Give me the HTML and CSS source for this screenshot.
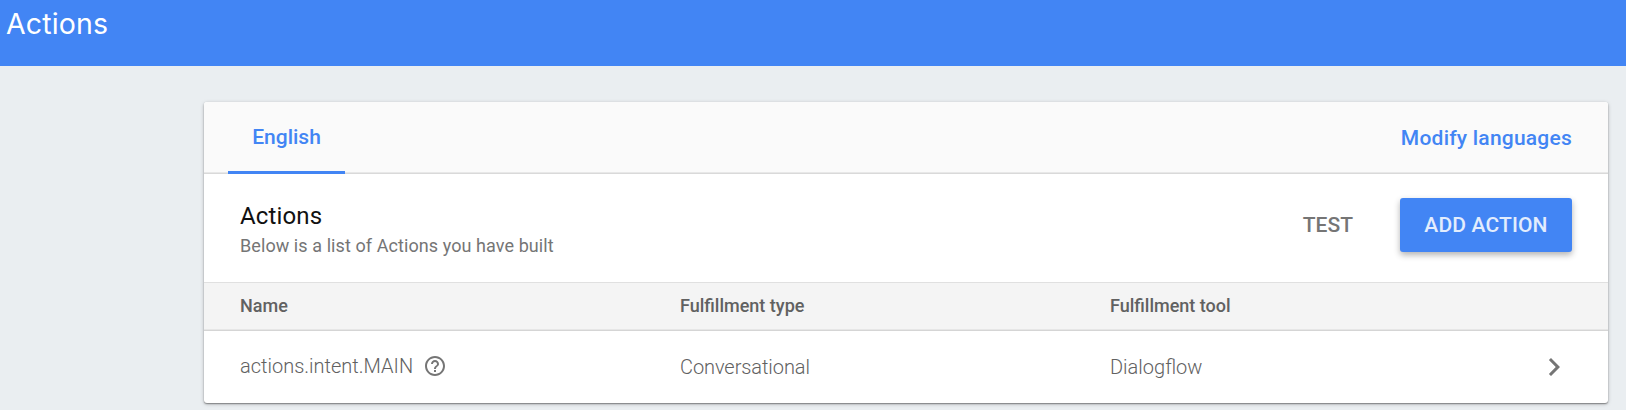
FILE: index.html
```html
<!DOCTYPE html>
<html lang="en">
<head>
<meta charset="utf-8">
<title>Actions</title>
<link rel="stylesheet" href="styles.css">
</head>
<body>
<header class="topbar"><h1 class="topbar-title">Actions</h1></header>
<main class="content">
  <section class="card">
    <nav class="tabs">
      <a class="tab">English</a>
      <a class="modify">Modify languages</a>
    </nav>
    <div class="intro">
      <div class="intro-text">
        <h2 class="heading">Actions</h2>
        <p class="sub">Below is a list of Actions you have built</p>
      </div>
      <button class="btn test">TEST</button>
      <button class="btn add">ADD ACTION</button>
    </div>
    <div class="row thead">
      <span>Name</span><span>Fulfillment type</span><span>Fulfillment tool</span>
    </div>
    <div class="row item">
      <span class="name">actions.intent.MAIN
        <svg class="help" viewBox="0 0 24 24"><path d="M11 18h2v-2h-2v2zm1-16C6.480 2 2 6.480 2 12s4.480 10 10 10 10-4.480 10-10S17.520 2 12 2zm0 18c-4.410 0-8-3.590-8-8s3.590-8 8-8 8 3.590 8 8-3.590 8-8 8zm0-14c-2.210 0-4 1.790-4 4h2c0-1.100.9-2 2-2s2 .9 2 2c0 2-3 1.750-3 5h2c0-2.250 3-2.500 3-5 0-2.210-1.790-4-4-4z"/></svg>
      </span>
      <span class="type">Conversational</span>
      <span>Dialogflow</span>
      <svg class="chevron" viewBox="0 0 24 24"><path d="M10 6L8.590 7.410 13.170 12l-4.580 4.590L10 18l6-6z"/></svg>
    </div>
  </section>
</main>
</body>
</html>
```
FILE: styles.css
```css
* { box-sizing: border-box; }
body {
  margin: 0;
  height: 410px;
  overflow: hidden;
  background: #eaeef1;
  font-family: Roboto, "Liberation Sans", sans-serif;
}
h1, h2, p { margin: 0; }
.topbar {
  height: 66px;
  padding: 6px 0 0 6px;
  background: #4285f4;
}
.topbar-title {
  font: 400 28.500px/36px Inter, sans-serif;
  letter-spacing: .15px;
  color: #fff;
}
.content { padding: 36px 18px 0 204px; }
.card {
  height: 301px;
  overflow: hidden;
  border-radius: 3px;
  background: #fff;
  box-shadow: 0 1px 1.500px rgba(0, 0, 0, .4), 0 1px 4px rgba(0, 0, 0, .2);
}
.tabs {
  display: flex;
  justify-content: space-between;
  height: 72px;
  padding: 0 36px 0 24px;
  background: #fafafa;
  box-shadow: inset 0 -1px #d9d9d9, inset 0 -2px #e8e8e8;
  font-size: 21px;
  font-weight: 500;
  color: #4285f4;
}
.tab {
  width: 117px;
  text-align: center;
  line-height: 70px;
  border-bottom: 3px solid #4285f4;
}
.modify {
  line-height: 72px;
  letter-spacing: .22px;
}
.intro {
  display: flex;
  align-items: flex-start;
  height: 108px;
  padding: 24px 36px 0;
}
.intro-text { flex: 1; }
.heading {
  font-size: 24px;
  font-weight: 400;
  line-height: 36px;
  letter-spacing: .15px;
  color: #111;
}
.sub {
  font-size: 18px;
  line-height: 24px;
  letter-spacing: .08px;
  color: #757575;
}
.btn {
  height: 54px;
  padding: 0 24px;
  border: 0;
  border-radius: 3px;
  background: none;
  font: 500 21px/54px Roboto, sans-serif;
  color: #757575;
}
.test { margin-right: 23px; }
.add {
  width: 172px;
  background: #4285f4;
  color: #e3edfd;
  letter-spacing: .15px;
  white-space: nowrap;
  box-shadow: 0 3px 6px rgba(0, 0, 0, .3);
}
.row {
  display: grid;
  grid-template-columns: 440px 430px 1fr 36px;
  align-items: center;
  padding: 0 36px;
}
.thead {
  height: 49px;
  padding-bottom: 2px;
  background: #f4f4f4;
  box-shadow: inset 0 1px #e0e0e0, inset 0 -1px #d5d5d5, inset 0 -2px #e6e6e6;
  font-size: 18px;
  font-weight: 500;
  color: #616161;
}
.item {
  height: 72px;
  font-size: 20px;
  font-weight: 300;
  color: #616161;
}
.name {
  display: flex;
  align-items: center;
  gap: 10px;
  padding-bottom: 3px;
}
.type { letter-spacing: -.08px; }
.help { width: 24px; height: 24px; fill: #757575; }
.chevron { width: 36px; height: 36px; fill: #757575; }
```
